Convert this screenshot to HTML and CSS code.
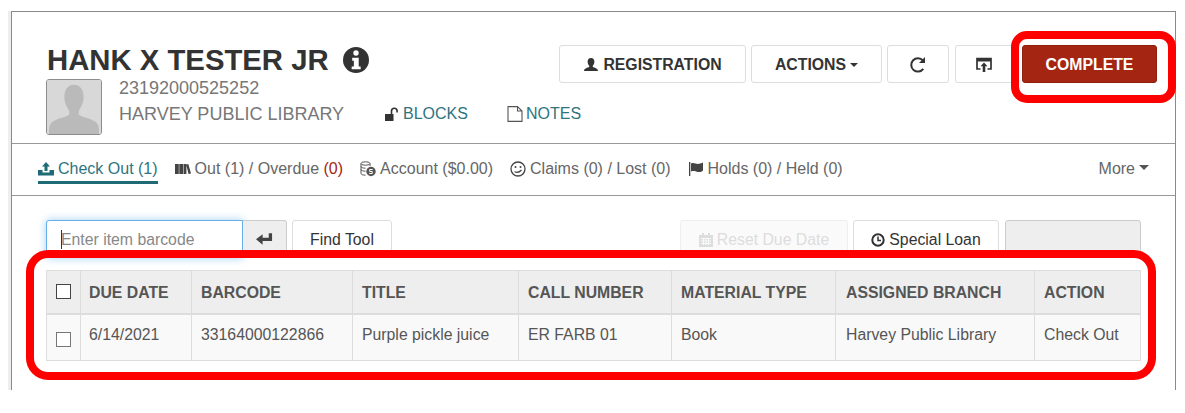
FILE: index.html
```html
<!DOCTYPE html>
<html lang="en">
<head>
    <meta charset="UTF-8">
    <title>Check Out</title>
    <link rel="stylesheet" href="styles.css">
</head>
<body>

<div class="patron-frame">
    <div class="patron-header">
        <div class="patron-info">
            <h1 class="patron-name">HANK X TESTER JR
                <svg class="info-icon" viewBox="0 0 24 24"><circle cx="12" cy="12" r="12" fill="#333"/><circle cx="12" cy="5.6" r="2.500" fill="#fff"/><path d="M8.500 10h6v8h1.800v2.600H8v-2.600h2v-5.400H8.500z" fill="#fff"/></svg>
            </h1>
            <div class="patron-detail">
                <svg class="avatar" viewBox="0 0 56 56"><rect width="56" height="56" fill="#d8d8d8"/><path d="M28 5c7 0 10 6 10 13 0 6-3 11-5 14v4c4 3 15 4 19 9 2 3 2 7 2 11H2c0-4 0-8 2-11 4-5 15-6 19-9v-4c-2-3-5-8-5-14C18 11 21 5 28 5z" fill="#bababa"/></svg>
                <div class="patron-text">
                    <div class="patron-barcode">23192000525252</div>
                    <div class="patron-links">
                        <span class="patron-branch">HARVEY PUBLIC LIBRARY</span>
                        <a class="link-blocks" href="#">
                            <svg class="link-icon" viewBox="0 0 16 16"><path d="M1 8h8.500v7H1z" fill="#333"/><path d="M7.500 8V5a2.800 2.800 0 0 1 5.600 0v1.500" fill="none" stroke="#333" stroke-width="1.600"/></svg>BLOCKS</a>
                        <a class="link-notes" href="#">
                            <svg class="link-icon" viewBox="0 0 16 16"><path d="M1 .6h9.500L15 5v10.400H1zM10.500 .6V5H15" fill="none" stroke="#555" stroke-width="1.100"/></svg>NOTES</a>
                    </div>
                </div>
            </div>
        </div>
        <div class="patron-actions">
            <button class="btn btn-registration"><svg class="btn-icon" viewBox="0 0 16 16"><path d="M8 1c2.200 0 3.400 1.700 3.400 3.800 0 1.800-.9 3.200-1.600 4v1.200c1.500.8 5.200 1 5.200 4H1c0-3 3.700-3.200 5.200-4V8.800c-.7-.8-1.600-2.200-1.600-4C4.600 2.700 5.800 1 8 1z" fill="#333"/></svg>REGISTRATION</button>
            <button class="btn btn-actions">ACTIONS<span class="caret"></span></button>
            <button class="btn btn-refresh"><svg class="btn-icon-lg" viewBox="0 0 18 18"><path d="M14.300 12.900A6.700 6.700 0 1 1 13.900 4.400" fill="none" stroke="#333" stroke-width="2"/><path d="M16 1v6h-6z" fill="#333"/></svg></button>
            <button class="btn btn-share"><svg class="btn-icon-lg" viewBox="0 0 18 18"><path d="M5.500 13H2V2.500h14V13h-3.500" fill="none" stroke="#333" stroke-width="1.700"/><path d="M2 3h14v2.500H2z" fill="#333"/><path d="M9 6.500l3.500 3.700h-2.200V16H7.700v-5.800H5.500z" fill="#333"/></svg></button>
            <button class="btn btn-complete">COMPLETE</button>
        </div>
    </div>

    <div class="tab-bar">
        <a class="tab tab-active" href="#"><svg class="tab-icon" viewBox="0 0 16 14"><path d="M8 0l4 4.500H9.500V9h-3V4.500H4z" fill="#1f6b75"/><path d="M0 8h4.500v2.500h7V8H16v5.500H0z" fill="#1f6b75"/></svg>Check Out (1)</a>
        <a class="tab" href="#"><svg class="tab-icon" viewBox="0 0 16 14"><path d="M0 2h3.800v10H0zM4.300 2h3.800v10H4.300zM8.600 2h2.800v10H8.600zM11.300 2.800l2-.8L16 11.500l-2.500.6z" fill="#444"/></svg>Out (1) / Overdue <span class="count-alert">(0)</span></a>
        <a class="tab" href="#"><svg class="tab-icon" viewBox="0 0 16 16"><ellipse cx="5.500" cy="2.500" rx="4.500" ry="1.700" fill="none" stroke="#555"/><path d="M1 2.500v10c0 .9 1.800 1.700 4.500 1.700M1 5.500c0 .9 1.800 1.700 4.500 1.700M1 8.500c0 .9 1.800 1.700 4.500 1.700M10 2.500V5" fill="none" stroke="#555"/><circle cx="11" cy="10.500" r="4.700" fill="#555"/><path d="M12.700 8.500h-3v2h2.500v2H9.200" fill="none" stroke="#fff"/></svg>Account ($0.00)</a>
        <a class="tab" href="#"><svg class="tab-icon" viewBox="0 0 16 16"><circle cx="8" cy="8" r="7" fill="none" stroke="#444" stroke-width="1.300"/><circle cx="5.500" cy="6" r="1" fill="#444"/><circle cx="10.500" cy="6" r="1" fill="#444"/><path d="M4.500 10.800c2 .8 5 .5 7-1.800" fill="none" stroke="#444" stroke-width="1.200"/></svg>Claims (0) / Lost (0)</a>
        <a class="tab" href="#"><svg class="tab-icon" viewBox="0 0 16 14"><path d="M1 0h1.300v14H1z" fill="#444"/><path d="M3 1.500c3-1.500 5 1 8 .3 2-.4 3-.8 4-1.300v8c-1.500 1.500-3 1.800-5 1.500-2.500-.4-4-1.500-7-.5z" fill="#444"/></svg>Holds (0) / Held (0)</a>
        <a class="tab tab-more" href="#">More<span class="caret caret-more"></span></a>
    </div>

    <div class="checkout-panel">
        <div class="toolbar">
            <div class="barcode-group">
                <input class="barcode-input" type="text" placeholder="Enter item barcode">
                <button class="btn-addon"><svg class="addon-icon" viewBox="0 0 18 14"><path d="M13.500 1H17v8H7v4L0 7.200 7 2v3.700h6.500z" fill="#444"/></svg></button>
            </div>
            <button class="btn-tool">Find Tool</button>
            <div class="toolbar-right">
                <button class="btn-tool btn-reset" disabled><svg class="tool-icon" viewBox="0 0 14 14"><path d="M0 2h14v12H0z" fill="#ddd"/><path d="M3 0h2v3H3zM9 0h2v3H9z" fill="#ddd"/><path d="M2 5.500h10M2 8h10M2 10.500h10M4.500 5v7M7 5v7M9.500 5v7" stroke="#fafafa"/></svg>Reset Due Date</button>
                <button class="btn-tool btn-special"><svg class="tool-icon" viewBox="0 0 14 14"><circle cx="7" cy="7" r="5.700" fill="none" stroke="#333" stroke-width="2"/><path d="M7 3.500V7.500h3" fill="none" stroke="#333" stroke-width="1.500"/></svg>Special Loan</button>
                <button class="btn-tool btn-blank" disabled></button>
            </div>
        </div>

        <table class="checkout-table">
            <colgroup>
                <col class="col-check"><col class="col-due"><col class="col-barcode"><col class="col-title"><col class="col-call"><col class="col-type"><col class="col-branch"><col class="col-action">
            </colgroup>
            <thead>
                <tr>
                    <th class="cell-check"><span class="checkbox checkbox-head"></span></th>
                    <th class="cell-due">DUE DATE</th>
                    <th>BARCODE</th>
                    <th>TITLE</th>
                    <th>CALL NUMBER</th>
                    <th>MATERIAL TYPE</th>
                    <th class="cell-branch">ASSIGNED BRANCH</th>
                    <th>ACTION</th>
                </tr>
            </thead>
            <tbody>
                <tr>
                    <td class="cell-check"><span class="checkbox"></span></td>
                    <td class="cell-due">6/14/2021</td>
                    <td>33164000122866</td>
                    <td>Purple pickle juice</td>
                    <td>ER FARB 01</td>
                    <td>Book</td>
                    <td class="cell-branch">Harvey Public Library</td>
                    <td>Check Out</td>
                </tr>
            </tbody>
        </table>
    </div>
</div>

<!-- red callouts drawn over the page -->
<div class="callout callout-complete"></div>
<div class="callout callout-table"></div>

</body>
</html>
```

FILE: styles.css
```css
/* page frame */
html, body { margin: 0; padding: 0; }
body { font-family: "Liberation Sans", Arial, sans-serif; color: #555; background-color: #fff; height: 413px; overflow: hidden; position: relative; }
.patron-frame { margin: 11px 9px 0 11px; height: 379px; border: 1px solid #8a8a8a; border-bottom: 0; box-shadow: -3px 0 0 #eee; box-sizing: border-box; }

/* header */
.patron-header { height: 132px; padding: 33px 18px 0 34px; box-sizing: border-box; border-bottom: 1px solid #999; display: flex; justify-content: space-between; align-items: flex-start; }
.patron-info { flex: 0 0 500px; min-width: 0; white-space: nowrap; }
.patron-name { margin: 0 0 0 1px; font-size: 29.3px; line-height: 30px; font-weight: bold; color: #333; display: flex; align-items: center; gap: 14px; }
.info-icon { width: 26px; height: 26px; }
.patron-detail { display: flex; gap: 17px; margin-top: 4px; }
.avatar { flex: none; width: 54px; height: 54px; border: 1px solid #8c8c8c; border-radius: 3px; display: block; }
.patron-text { flex: none; font-size: 18px; color: #777; }
.patron-barcode { line-height: 20px; margin-top: -1px; }
.patron-links { display: flex; align-items: center; line-height: 20px; margin-top: 6px; }
.patron-branch { width: 265px; }
.patron-links a { color: #2e7480; text-decoration: none; font-size: 16px; display: flex; align-items: center; }
.link-blocks { width: 123px; }
.link-icon { width: 16px; height: 16px; margin-right: 3px; }

/* header buttons */
.patron-actions { display: flex; }
.btn { height: 38px; background-color: #fff; border: 1px solid #ddd; border-radius: 3px; font-family: inherit; font-size: 15.8px; font-weight: bold; color: #333; padding: 1px 0 0; display: flex; align-items: center; justify-content: center; box-sizing: border-box; }
.btn-registration { width: 187px; margin-right: 5px; }
.btn-actions { width: 131px; margin-right: 5px; }
.btn-refresh { width: 62px; margin-right: 6px; }
.btn-share { width: 58px; margin-right: 9px; }
.btn-complete { width: 135px; background-color: #a42512; border-color: #8f1f0f; color: #fff; }
.btn-icon { width: 16px; height: 16px; margin-right: 4px; }
.btn-icon-lg { width: 18px; height: 18px; }
.caret { display: inline-block; margin-left: 4px; border-top: 4px solid #333; border-left: 4px solid transparent; border-right: 4px solid transparent; }

/* tabs */
.tab-bar { height: 52px; padding: 0 26px; box-sizing: border-box; border-bottom: 1px solid #999; display: flex; align-items: flex-start; gap: 17px; font-size: 16px; }
.tab { color: #666; text-decoration: none; display: flex; align-items: center; height: 23px; margin-top: 13px; padding-bottom: 1px; white-space: pre; }
.tab-active { color: #2e7480; border-bottom: 3px solid #1f6b75; }
.tab-icon { width: 16px; height: 16px; margin-right: 4px; }
.count-alert { color: #a42512; }
.tab-more { margin-left: auto; }
.caret-more { margin-left: 4px; border-top-color: #555; border-top-width: 5px; border-left-width: 5px; border-right-width: 5px; margin-top: -3px; }

/* checkout toolbar */
.checkout-panel { padding: 24px 34px 0 34px; }
.toolbar { display: flex; height: 38px; gap: 5px; margin-bottom: 12px; }
.barcode-group { display: flex; position: relative; }
.barcode-group::before { content: ""; position: absolute; left: 15px; top: 10px; width: 1px; height: 19px; background-color: #333; }
.barcode-input { width: 197px; height: 38px; box-sizing: border-box; border: 1px solid #66afe9; border-radius: 3px 0 0 3px; box-shadow: 0 0 8px rgba(102,175,233,.6); padding: 2px 14px 0; font-family: inherit; font-size: 15.8px; color: #555; outline: none; }
.barcode-input::placeholder { color: #888; }
.btn-addon { width: 44px; height: 38px; background-color: #eee; border: 1px solid #ccc; border-left: 0; border-radius: 0 3px 3px 0; padding: 0; display: flex; align-items: center; justify-content: center; }
.addon-icon { width: 17px; height: 14px; }
.btn-tool { height: 38px; box-sizing: border-box; background-color: #fff; border: 1px solid #ddd; border-radius: 3px; font-family: inherit; font-size: 15.8px; color: #333; padding: 2px 0 0; width: 100px; display: flex; align-items: center; justify-content: center; }
.toolbar-right { margin-left: auto; display: flex; gap: 5px; }
.btn-reset { width: 168px; color: #ddd; background-color: #fafafa; border-color: #eee; }
.btn-special { width: 146px; margin-right: 1px; }
.btn-blank { width: 136px; background-color: #eee; border-color: #ccc; }
.tool-icon { width: 14px; height: 14px; margin-right: 4px; }

/* table */
.checkout-table { border-collapse: collapse; table-layout: fixed; width: 1094px; font-size: 15.8px; }
.col-check { width: 34px; }
.col-due { width: 111px; }
.col-barcode { width: 161px; }
.col-title { width: 166px; }
.col-call { width: 153px; }
.col-type { width: 164px; }
.col-branch { width: 199px; }
.col-action { width: 106px; }
.checkout-table th, .checkout-table td { border: 1px solid #ddd; padding: 0 9px; text-align: left; white-space: nowrap; }
.checkout-table th { height: 41px; padding-top: 1px; background-color: #eee; font-weight: bold; color: #555; border-bottom-width: 2px; }
.checkout-table td { height: 46px; background-color: #f9f9f9; color: #555; padding-bottom: 5px; box-sizing: border-box; }
.checkout-table .cell-check { padding: 0; text-align: center; }
.checkout-table .cell-due { padding-left: 8px; }
.checkout-table .cell-branch { padding-left: 10px; }
.checkbox { display: inline-block; width: 13px; height: 13px; border: 1px solid #777; background-color: #fff; vertical-align: middle; margin-top: 5px; }
.checkbox-head { border-color: #444; margin-top: -2px; }

/* annotation boxes */
.callout { position: absolute; border: 8px solid #f00; box-sizing: border-box; }
.callout-complete { left: 1011px; top: 31px; width: 165px; height: 72px; border-radius: 16px; }
.callout-table { left: 26px; top: 250px; width: 1130px; height: 130px; border-radius: 22px; }
```
